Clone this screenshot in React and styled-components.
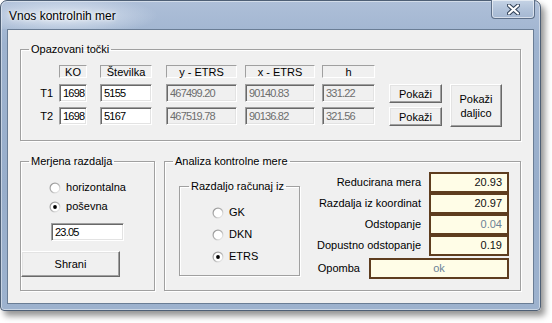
import React from 'react';
import styled, { createGlobalStyle } from 'styled-components';

const Global = createGlobalStyle`
  html, body { margin: 0; padding: 0; background: #ffffff; }
  body { font-family: "Liberation Sans", Arial, sans-serif; font-size: 11px; color: #000; }
  * { box-sizing: border-box; }
`;

const Page = styled.div`
  width: 552px;
  height: 323px;
  padding: 0;
`;

const Window = styled.div`
  width: 541px;
  height: 311px;
  display: flex;
  flex-direction: column;
  border: 1px solid #4e5f75;
  border-radius: 7px 7px 4px 4px;
  background: linear-gradient(180deg, #aebfd8 0%, #9eb3cf 14%, #98aecb 60%, #9db2ce 100%);
  box-shadow: 4px 5px 6px rgba(0, 0, 0, 0.42), inset 0 0 0 1px rgba(255, 255, 255, 0.45);
`;

const TitleBar = styled.div`
  height: 28px;
  display: flex;
  align-items: flex-start;
  justify-content: space-between;
  padding-left: 8px;
  border-radius: 6px 6px 0 0;
  background: radial-gradient(ellipse 95px 20px at 62px 15px, rgba(232, 239, 248, 0.85), rgba(232, 239, 248, 0) 100%);
`;

const TitleText = styled.span`
  font-family: "Liberation Sans", Arial, sans-serif;
  font-size: 12px;
  line-height: 15px;
  margin-top: 8px;
  color: #000;
  text-shadow: 0 0 6px #fff, 0 0 3px rgba(255, 255, 255, 0.9);
`;

const CloseButton = styled.div`
  width: 44px;
  height: 19px;
  margin-top: -1px;
  margin-right: 5px;
  display: flex;
  align-items: center;
  justify-content: center;
  border: 1px solid #5d6f88;
  border-top: none;
  border-radius: 0 0 4px 4px;
  background: linear-gradient(180deg, #c5d3e5 0%, #b2c3da 50%, #a5b8d2 100%);
  box-shadow: inset 0 0 0 1px rgba(255, 255, 255, 0.55);
`;

const Client = styled.div`
  flex: 1;
  margin: 0 6px 6px 6px;
  border: 1px solid #6a7d95;
  background: #f0f0f0;
  padding: 13px 12px 0 12px;
  display: flex;
  flex-direction: column;
`;

const Group = styled.fieldset`
  margin: 0;
  padding: ${(p) => p.$pad || '0'};
  min-width: 0;
  border: 1px solid #a0a0a0;
  box-shadow: 1px 1px 0 #ffffff, inset 1px 1px 0 #ffffff;
  width: ${(p) => (p.$w ? `${p.$w}px` : 'auto')};
  height: ${(p) => (p.$h ? `${p.$h}px` : 'auto')};
  flex-shrink: 0;
`;

const Legend = styled.legend`
  margin-left: ${(p) => p.$ml || 8}px;
  padding: 0 2px;
  font-size: 11px;
  line-height: 13px;
`;

const PointsGrid = styled.div`
  display: grid;
  grid-template-columns: 38px 28px 65px 85px 78px 60px 67px 60px;
  grid-template-rows: 14px 18px 18px;
  row-gap: 5px;
`;

const RowLabel = styled.div`
  justify-self: end;
  align-self: center;
  padding-right: 6px;
  line-height: 13px;
`;

const HeaderCell = styled.div`
  justify-self: end;
  align-self: start;
  width: ${(p) => p.$w}px;
  height: 13px;
  line-height: 12px;
  text-align: center;
  border: 1px solid;
  border-color: #a0a0a0 #ffffff #ffffff #a0a0a0;
`;

const Field = styled.input`
  justify-self: end;
  width: ${(p) => p.$w}px;
  height: 18px;
  padding: 0 1px 0 3px;
  margin: 0;
  font-family: "Liberation Sans", Arial, sans-serif;
  font-size: 11px;
  letter-spacing: -0.8px;
  color: ${(p) => (p.$dim ? '#6d6d6d' : '#000')};
  background: ${(p) => (p.$dim ? '#f0f0f0' : '#ffffff')};
  border: 1px solid;
  border-color: #a0a0a0 #ffffff #ffffff #a0a0a0;
  box-shadow: inset 1px 1px 0 #696969, inset -1px -1px 0 #e3e3e3;
  outline: none;
`;

const Button = styled.button`
  justify-self: end;
  width: ${(p) => p.$w}px;
  height: ${(p) => p.$h}px;
  margin: 0;
  padding: 0;
  font-family: "Liberation Sans", Arial, sans-serif;
  font-size: 11px;
  line-height: 14px;
  color: #000;
  background: #f0f0f0;
  border: 1px solid;
  border-color: #ffffff #696969 #696969 #ffffff;
  box-shadow: inset -1px -1px 0 #a0a0a0, inset 1px 1px 0 #e3e3e3;
  grid-row: ${(p) => p.$row || 'auto'};
  grid-column: ${(p) => p.$col || 'auto'};
  align-self: start;
`;

const BottomRow = styled.div`
  display: flex;
  gap: 9px;
  margin-top: 14px;
`;

const MeasureBody = styled.div`
  display: flex;
  flex-direction: column;
  align-items: center;
  padding-top: 12px;
`;

const RadioList = styled.div`
  display: flex;
  flex-direction: column;
  gap: ${(p) => p.$gap || 4}px;
  align-self: ${(p) => (p.$start ? 'flex-start' : 'center')};
  padding-left: ${(p) => p.$pl || 0}px;
  padding-top: ${(p) => p.$pt || 0}px;
`;

const RadioRow = styled.label`
  display: flex;
  align-items: center;
  gap: 5px;
  height: 15px;
  line-height: 13px;
`;

const DistanceField = styled(Field)`
  margin-top: 9px;
`;

const SaveButton = styled(Button)`
  margin-top: 10px;
`;

const AnalysisBody = styled.div`
  display: flex;
  align-items: flex-start;
  padding: 0 11px 0 14px;
`;

const SourceGroup = styled(Group)`
  margin-top: 12px;
`;

const Results = styled.div`
  margin-left: auto;
  margin-top: 4px;
  display: flex;
  flex-direction: column;
  align-items: flex-end;
`;

const ResultGrid = styled.div`
  display: grid;
  grid-template-columns: auto 80px;
  grid-auto-rows: 21px;
  column-gap: 8px;
`;

const ResultLabel = styled.div`
  justify-self: end;
  align-self: center;
  line-height: 13px;
`;

const ValueBox = styled.div`
  width: ${(p) => p.$w}px;
  height: 21px;
  padding: 0 5px;
  display: flex;
  align-items: center;
  justify-content: ${(p) => (p.$center ? 'center' : 'flex-end')};
  background: #fffde7;
  border: 2px solid #5e3d1f;
  color: ${(p) => (p.$muted ? '#6c8297' : '#111')};
  line-height: 13px;
`;

const NoteRow = styled.div`
  display: flex;
  align-items: center;
  gap: 9px;
  margin-top: 2px;
`;

const CloseGlyph = () => (
  <svg width="13" height="11" viewBox="0 0 13 11">
    <path d="M2 1.5 L11 9.5 M11 1.5 L2 9.5" stroke="#34445a" strokeWidth="4.2" strokeLinecap="round" />
    <path d="M2 1.5 L11 9.5 M11 1.5 L2 9.5" stroke="#ffffff" strokeWidth="2.2" strokeLinecap="round" />
  </svg>
);

let radioId = 0;
const RadioMark = ({ checked }) => {
  const id = React.useMemo(() => `rg${radioId++}`, []);
  return (
    <svg width="12" height="12" viewBox="0 0 12 12">
      <defs>
        <linearGradient id={id} x1="0" y1="0" x2="1" y2="1">
          <stop offset="0" stopColor="#8c8c8c" />
          <stop offset="0.5" stopColor="#b4b4b4" />
          <stop offset="1" stopColor="#ffffff" />
        </linearGradient>
      </defs>
      <circle cx="6" cy="6" r="5.5" fill={`url(#${id})`} />
      <circle cx="6" cy="6" r="4.3" fill="#ffffff" />
      {checked && <circle cx="6" cy="6" r="1.9" fill="#000" />}
    </svg>
  );
};

const Radio = ({ checked, children }) => (
  <RadioRow>
    <RadioMark checked={checked} />
    <span>{children}</span>
  </RadioRow>
);

const points = [
  { name: 'T1', ko: '1698', st: '5155', y: '467499.20', x: '90140.83', h: '331.22' },
  { name: 'T2', ko: '1698', st: '5167', y: '467519.78', x: '90136.82', h: '321.56' },
];

const results = [
  { label: 'Reducirana mera', value: '20.93' },
  { label: 'Razdalja iz koordinat', value: '20.97' },
  { label: 'Odstopanje', value: '0.04', muted: true },
  { label: 'Dopustno odstopanje', value: '0.19' },
];

export default function App() {
  return (
    <Page>
      <Global />
      <Window>
        <TitleBar>
          <TitleText>Vnos kontrolnih mer</TitleText>
          <CloseButton>
            <CloseGlyph />
          </CloseButton>
        </TitleBar>
        <Client>
          <Group $pad="9px 0 15px 0">
            <Legend>Opazovani točki</Legend>
            <PointsGrid>
              <div />
              <HeaderCell $w={28}>KO</HeaderCell>
              <HeaderCell $w={52}>Številka</HeaderCell>
              <HeaderCell $w={71}>y - ETRS</HeaderCell>
              <HeaderCell $w={70}>x - ETRS</HeaderCell>
              <HeaderCell $w={53}>h</HeaderCell>
              <div />
              <div />
              {points.map((p, i) => (
                <React.Fragment key={p.name}>
                  <RowLabel>{p.name}</RowLabel>
                  <Field $w={28} defaultValue={p.ko} readOnly />
                  <Field $w={52} defaultValue={p.st} readOnly />
                  <Field $w={71} $dim defaultValue={p.y} readOnly />
                  <Field $w={70} $dim defaultValue={p.x} readOnly />
                  <Field $w={53} $dim defaultValue={p.h} readOnly />
                  <Button $w={53} $h={19} $col={7} $row={i + 2}>Pokaži</Button>
                  {i === 0 && (
                    <Button $w={52} $h={43} $col={8} $row="2 / span 2">
                      Pokaži
                      <br />
                      daljico
                    </Button>
                  )}
                </React.Fragment>
              ))}
            </PointsGrid>
          </Group>
          <BottomRow>
            <Group $w={135} $h={136}>
              <Legend>Merjena razdalja</Legend>
              <MeasureBody>
                <RadioList>
                  <Radio>horizontalna</Radio>
                  <Radio checked>poševna</Radio>
                </RadioList>
                <DistanceField $w={73} defaultValue="23.05" readOnly />
                <SaveButton $w={99} $h={26}>Shrani</SaveButton>
              </MeasureBody>
            </Group>
            <Group $w={357} $h={136}>
              <Legend>Analiza kontrolne mere</Legend>
              <AnalysisBody>
                <SourceGroup $w={121} $h={96}>
                  <Legend $ml={9}>Razdaljo računaj iz</Legend>
                  <RadioList $start $gap={7} $pl={32} $pt={12}>
                    <Radio>GK</Radio>
                    <Radio>DKN</Radio>
                    <Radio checked>ETRS</Radio>
                  </RadioList>
                </SourceGroup>
                <Results>
                  <ResultGrid>
                    {results.map((r) => (
                      <React.Fragment key={r.label}>
                        <ResultLabel>{r.label}</ResultLabel>
                        <ValueBox $w={80} $muted={r.muted}>{r.value}</ValueBox>
                      </React.Fragment>
                    ))}
                  </ResultGrid>
                  <NoteRow>
                    <ResultLabel>Opomba</ResultLabel>
                    <ValueBox $w={140} $center $muted>ok</ValueBox>
                  </NoteRow>
                </Results>
              </AnalysisBody>
            </Group>
          </BottomRow>
        </Client>
      </Window>
    </Page>
  );
}
